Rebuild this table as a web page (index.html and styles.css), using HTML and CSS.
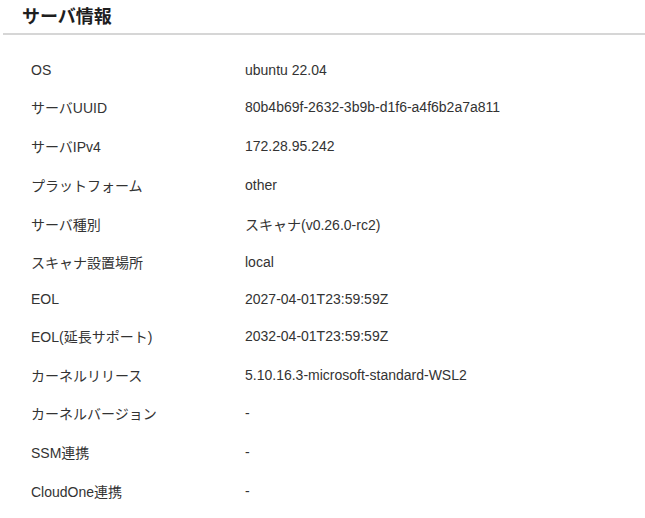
FILE: index.html
```html
<!DOCTYPE html>
<html lang="ja">
<head>
<meta charset="utf-8">
<title>サーバ情報</title>
<link rel="stylesheet" href="styles.css">
</head>
<body>
<section class="panel">
  <h2 class="panel-title">サーバ情報</h2>
  <table class="info">
    <tbody>
      <tr><th>OS</th><td>ubuntu 22.04</td></tr>
      <tr><th>サーバUUID</th><td>80b4b69f-2632-3b9b-d1f6-a4f6b2a7a811</td></tr>
      <tr><th>サーバIPv4</th><td>172.28.95.242</td></tr>
      <tr><th>プラットフォーム</th><td>other</td></tr>
      <tr><th>サーバ種別</th><td>スキャナ(v0.26.0-rc2)</td></tr>
      <tr><th>スキャナ設置場所</th><td>local</td></tr>
      <tr><th>EOL</th><td>2027-04-01T23:59:59Z</td></tr>
      <tr><th>EOL(延長サポート)</th><td>2032-04-01T23:59:59Z</td></tr>
      <tr><th>カーネルリリース</th><td>5.10.16.3-microsoft-standard-WSL2</td></tr>
      <tr><th>カーネルバージョン</th><td>-</td></tr>
      <tr><th>SSM連携</th><td>-</td></tr>
      <tr><th>CloudOne連携</th><td>-</td></tr>
    </tbody>
  </table>
</section>
</body>
</html>
```
FILE: styles.css
```css
html, body {
  margin: 0;
  padding: 0;
  background: #ffffff;
}

body {
  font-family: "Liberation Sans", "Noto Sans CJK JP", sans-serif;
  color: #333333;
  font-size: 14px;
}

.panel {
  padding-left: 3px;
}

.panel-title {
  margin: 0;
  padding: 4px 0 3px 19px;
  font-size: 18px;
  line-height: 26px;
  font-weight: bold;
  color: #1e1e1e;
  border-bottom: 2px solid #d6d6d6;
}

.info {
  margin: 18px 0 0 28px;
  border-collapse: collapse;
}

.info th,
.info td {
  padding: 9.4px 0;
  text-align: left;
  vertical-align: middle;
  font-weight: normal;
}

.info th {
  width: 214px;
}
```
